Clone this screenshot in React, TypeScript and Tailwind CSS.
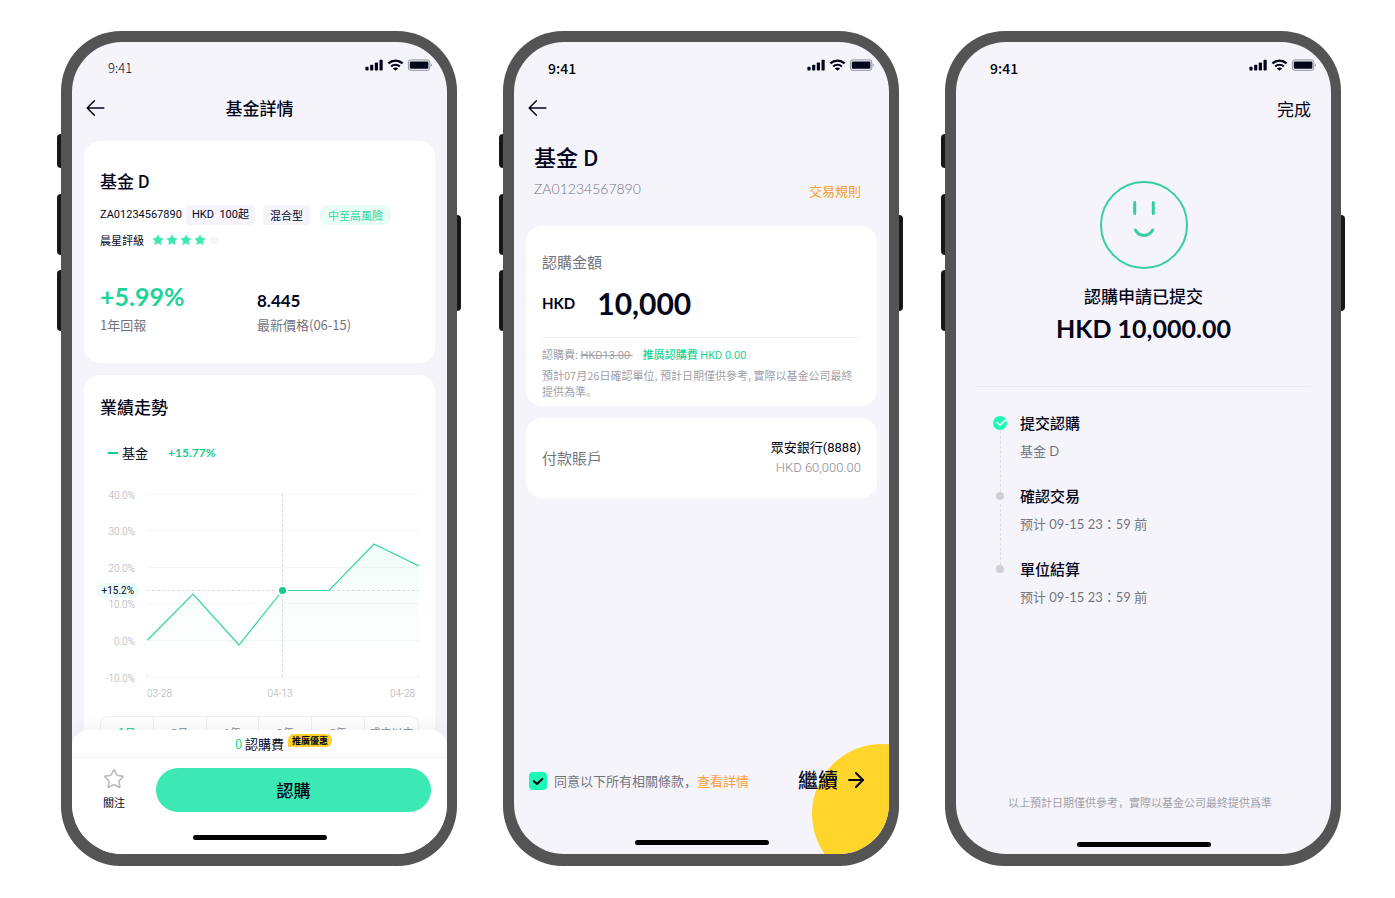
import React, { useState } from 'react';
import { Star, ArrowRight } from 'lucide-react';

const StatusBar = ({ light = false }: { light?: boolean }) => (
  <div className={`flex h-11 shrink-0 items-center justify-between pr-[15px] ${light ? 'pl-9' : 'pl-[34px]'}`}>
    <span className={`pt-2 leading-5 ${light ? 'text-[13px] font-light' : 'text-sm font-medium text-black'}`}>9:41</span>
    <svg width="67" height="12" viewBox="0 0 67 12" className="mt-0.5 shrink-0" aria-hidden="true">
      <g fill="#03051a">
        <rect x="0.4" y="7.8" width="3.2" height="3.7" rx="0.8" />
        <rect x="5.1" y="5.8" width="3.2" height="5.7" rx="0.8" />
        <rect x="9.8" y="3.4" width="3.2" height="8.1" rx="0.8" />
        <rect x="14.5" y="0.8" width="3.2" height="10.7" rx="0.8" />
        <path d="M27.8 9.4c1.5-1.3 3.9-1.3 5.4 0l-2.7 2.4Z" />
        <rect x="44.8" y="2.4" width="18.6" height="7.4" rx="1.2" />
      </g>
      <g fill="none" stroke="#03051a" strokeWidth="2.2">
        <path d="M23.4 4.4a10.4 10.4 0 0 1 14.2 0" />
        <path d="M26.2 7.5a6.2 6.2 0 0 1 8.6 0" />
      </g>
      <rect x="43.4" y="0.9" width="21.4" height="10.4" rx="2.4" fill="none" stroke="#03051a" strokeOpacity="0.4" />
      <path d="M65.8 4.4v3.4c.7-.3 1.1-.9 1.1-1.7s-.4-1.4-1.1-1.7Z" fill="#03051a" fillOpacity="0.4" />
    </svg>
  </div>
);

const BackButton = () => (
  <button type="button" aria-label="返回" className="flex h-6 w-6 items-center">
    <svg width="19" height="18" viewBox="0 0 19 18" fill="none" stroke="#03051a" strokeWidth="1.5" strokeLinecap="round" strokeLinejoin="round">
      <path d="M8.4 1.8 1.2 9l7.2 7.2M1.2 9h16.6" />
    </svg>
  </button>
);

const HomeIndicator = () => <div className="mx-auto h-[5px] w-[134px] rounded-full bg-black" />;

const Phone = ({ children }: { children: React.ReactNode }) => (
  <div className="relative flex aspect-[396/835] min-h-0 min-w-[360px] max-w-[440px] flex-1 flex-col rounded-[60px] bg-[#545454] pt-[11px] pr-[10px] pb-3 pl-[11px]">
    {/* Side buttons */}
    <div className="absolute top-[103px] -left-1 h-[34px] w-1 rounded-l-sm bg-[#171717]" />
    <div className="absolute top-[163px] -left-1 h-[61px] w-1 rounded-l-sm bg-[#171717]" />
    <div className="absolute top-[239px] -left-1 h-[61px] w-1 rounded-l-sm bg-[#171717]" />
    <div className="absolute top-[184px] -right-1 h-24 w-1 rounded-r-sm bg-[#171717]" />
    <section className="relative flex min-h-0 flex-1 flex-col overflow-hidden rounded-[50px] bg-[#f5f4fb]">
      {children}
    </section>
  </div>
);

const gridLines = [
  { label: '40.0%', y: 11.5 },
  { label: '30.0%', y: 47.5 },
  { label: '20.0%', y: 84.5 },
  { label: '10.0%', y: 120.5 },
  { label: '0.0%', y: 157.5 },
  { label: '-10.0%', y: 194.5 },
];

const PerformanceChart = () => (
  <svg viewBox="0 0 319 221" className="mt-5 w-full overflow-visible font-['Roboto',sans-serif] font-light" role="img" aria-label="業績走勢">
    <defs>
      <linearGradient id="area" x1="0" y1="0" x2="0" y2="1">
        <stop offset="0" stopColor="#1dd397" stopOpacity="0.06" />
        <stop offset="0.9" stopColor="#1dd397" stopOpacity="0" />
      </linearGradient>
    </defs>
    {gridLines.map((line) => (
      <g key={line.label}>
        <path d={`M47 ${line.y}H319`} stroke="#f6f6f8" />
        <text x="35" y={line.y + 4} textAnchor="end" fontSize="10" fill="#adadb2">{line.label}</text>
      </g>
    ))}
    <path d="M47.5 192v3M318.5 192v3" stroke="#e6e6ea" />
    <path d="M47.5 157 93 111 139 162 182.5 107.5H229L274 61 319 83V194H47.5Z" fill="url(#area)" />
    <path d="M47 107.5H319M182.5 11V194" stroke="#d9d9dd" strokeDasharray="3 2" />
    <path d="M47.5 157 93 111 139 162 182.5 107.5H229L274 61 319 83" fill="none" stroke="#2fd6a0" strokeWidth="1.2" />
    <circle cx="182.5" cy="107.5" r="4.5" fill="#14cb90" stroke="#fff" strokeWidth="2" />
    <rect x="-4" y="100" width="43" height="15" rx="7.5" fill="#eafcf6" />
    <text x="34" y="111" textAnchor="end" fontSize="10" fontWeight="400" fill="#03051a">+15.2%</text>
    <g fontSize="10" fill="#adadb2">
      <text x="47" y="214">03-28</text>
      <text x="180" y="214" textAnchor="middle">04-13</text>
      <text x="315" y="214" textAnchor="end">04-28</text>
    </g>
  </svg>
);

const FundDetail = () => {
  const [period, setPeriod] = useState('1月');
  const periods = ['1月', '3月', '1年', '3年', '5年', '成立以來'];

  return (
    <Phone>
      <StatusBar light />
      <header className="grid h-11 shrink-0 grid-cols-[1fr_auto_1fr] items-center px-3.5">
        <BackButton />
        <h1 className="text-[17px] leading-6 font-medium">基金詳情</h1>
      </header>

      <div className="min-h-0 flex-1 overflow-hidden px-3 pt-[11px]">
        {/* Fund summary */}
        <div className="rounded-2xl bg-white px-4 py-7">
          <h2 className="text-[17px] leading-6 font-medium">基金 D</h2>
          <div className="mt-3 flex h-5 items-center text-[11px] leading-5 whitespace-nowrap">
            <span className="w-[86px] font-['Roboto',sans-serif]">ZA01234567890</span>
            <span className="rounded bg-[#f5f4fb] px-1.5 font-['Roboto','Noto_Sans_CJK_TC',sans-serif]">HKD&nbsp; 100起</span>
            <span className="ml-2 rounded bg-[#f5f4fb] px-[7px]">混合型</span>
            <span className="ml-2.5 rounded-lg bg-[#eafcf6] px-2 text-[#2fd6a0]">中至高風險</span>
          </div>
          <div className="mt-[5px] flex h-5 items-center gap-2 text-[11px]">
            <span>晨星評級</span>
            <div className="flex gap-0.5" role="img" aria-label="4 / 5">
              {[1, 2, 3, 4, 5].map((n) => (
                <Star key={n} size={12} strokeWidth={1} className={n < 5 ? 'fill-[#3ce8b4] text-[#3ce8b4]' : 'fill-[#f5f4fb] text-[#f5f4fb]'} />
              ))}
            </div>
          </div>
          <div className="mt-8 grid grid-cols-[157px_1fr] items-end">
            <div>
              <p className="font-['Lato',sans-serif] text-[25px] leading-7 font-bold text-[#1dd397]">+5.99%</p>
              <p className="mt-[5px] text-[13px] leading-5 text-[#74747e]">1年回報</p>
            </div>
            <div>
              <p className="font-['Lato',sans-serif] text-[17px] leading-5 font-bold">8.445</p>
              <p className="mt-1 text-[13px] leading-5 text-[#74747e]">最新價格(06-15)</p>
            </div>
          </div>
        </div>

        {/* Performance */}
        <div className="mt-3 rounded-2xl bg-white px-4 pt-5 pb-10">
          <h2 className="text-[17px] leading-6 font-medium">業績走勢</h2>
          <div className="mt-6 flex h-5 items-center pl-2 text-[13px]">
            <span className="h-0.5 w-2.5 bg-[#14cb90]" />
            <span className="ml-1">基金</span>
            <span className="ml-5 font-['Lato',sans-serif] text-xs font-bold text-[#14cb90]">+15.77%</span>
          </div>
          <PerformanceChart />
          <div className="mt-3 grid grid-cols-6 divide-x divide-[#f0f0f3] rounded-lg border border-[#f0f0f3] text-[11px] text-[#8c8c95]">
            {periods.map((p) => (
              <button key={p} type="button" onClick={() => setPeriod(p)} className={`h-[30px] whitespace-nowrap ${p === period ? 'font-medium text-[#1dd397]' : ''}`}>
                {p}
              </button>
            ))}
          </div>
        </div>
      </div>

      {/* Bottom sheet */}
      <footer className="relative -mt-4 shrink-0 rounded-t-2xl bg-white pb-3.5 shadow-[0_-4px_20px_rgba(0,0,0,0.05)]">
        <div className="flex h-7 items-center justify-center border-b border-[#f2f2f4] text-[13px]">
          <p className="relative">
            <span className="text-[#1dd397]">0</span> 認購費
            <span className="absolute top-0 left-full ml-1 rounded-[6px] rounded-bl-none bg-[#ffd02b] px-1 text-[9px] leading-[13px] font-bold whitespace-nowrap">推廣優惠</span>
          </p>
        </div>
        <div className="flex pt-2.5 pr-4">
          <button type="button" className="flex w-[84px] flex-col items-center text-[11px] leading-4">
            <Star size={22} strokeWidth={1.8} className="text-[#bcbcc0]" />
            <span className="mt-1">關注</span>
          </button>
          <button type="button" className="h-11 flex-1 rounded-full bg-[#3ce8b4] text-[17px] font-medium">認購</button>
        </div>
        <div className="mt-[23px]">
          <HomeIndicator />
        </div>
      </footer>
    </Phone>
  );
};

const Subscribe = () => {
  const [amount, setAmount] = useState('10,000');
  const [agreed, setAgreed] = useState(true);

  return (
    <Phone>
      <div className="absolute -right-[63px] -bottom-[30px] h-[140px] w-[140px] rounded-full bg-[#ffd52c]" />
      <StatusBar />
      <header className="flex h-11 shrink-0 items-center px-3.5">
        <BackButton />
      </header>

      <div className="mt-2.5 flex items-end justify-between pr-7 pl-5">
        <div>
          <h1 className="text-[22px] leading-8 font-medium">基金 D</h1>
          <p className="mt-[7px] font-['Lato',sans-serif] text-sm leading-5 font-light text-[#74747e]">ZA01234567890</p>
        </div>
        <a href="#rules" className="text-[13px] leading-4 text-[#efa01c]">交易規則</a>
      </div>

      <div className="mx-3 mt-[27px] rounded-2xl bg-white px-4 pt-6 pb-[7px]">
        <label htmlFor="amount" className="block text-[15px] leading-6 text-[#74747e]">認購金額</label>
        <div className="mt-2 flex h-[42px] items-center gap-[22px]">
          <span className="font-['Lato',sans-serif] text-[15px] font-bold">HKD</span>
          <input
            id="amount"
            value={amount}
            onChange={(e) => setAmount(e.target.value)}
            className="min-w-0 flex-1 bg-transparent font-['Lato',sans-serif] text-[30px] leading-10 font-bold outline-none"
          />
        </div>
        <div className="mt-[13px] border-t border-[#f2f2f4] pt-2 text-[11px] leading-4 text-[#a0a0a8]">
          <p className="flex h-4 items-baseline gap-2.5 whitespace-nowrap">
            <span>認購費: <s className="font-['Roboto',sans-serif]">HKD13.00&nbsp;</s></span>
            <span className="font-medium text-[#1dd397]">推廣認購費 <span className="font-['Roboto',sans-serif] font-normal">HKD 0.00</span></span>
          </p>
          <p className="mt-[5px] font-['Noto_Sans_CJK_SC',sans-serif]">預計07月26日確認單位, 預計日期僅供參考, 實際以基金公司最終提供為準。</p>
        </div>
      </div>

      <div className="mx-3 mt-3 flex items-center justify-between rounded-2xl bg-white px-4 py-5">
        <span className="text-[15px] text-[#74747e]">付款賬戶</span>
        <div className="text-right font-['Roboto','Noto_Sans_CJK_TC',sans-serif] text-[13px] leading-5">
          <p>眾安銀行(8888)</p>
          <p className="font-light text-[#8c8c95]">HKD 60,000.00</p>
        </div>
      </div>

      <footer className="relative mt-auto pb-[9px]">
        <div className="flex h-6 items-center justify-between pr-[21px] pl-[15px]">
          <div className="flex items-center font-['Noto_Sans_CJK_SC',sans-serif] text-[13px] text-[#74747e]">
            <span className="relative flex h-[18px] w-[18px]">
              <input
                id="agree"
                type="checkbox"
                checked={agreed}
                onChange={(e) => setAgreed(e.target.checked)}
                className="h-[18px] w-[18px] appearance-none rounded bg-white checked:bg-[#1cf9b5]"
              />
              {agreed && (
                <svg viewBox="0 0 18 18" className="pointer-events-none absolute inset-0" fill="none" stroke="#03051a" strokeWidth="2.2" strokeLinecap="round" strokeLinejoin="round">
                  <path d="M5 9.2 8 12l5.2-5" />
                </svg>
              )}
            </span>
            <label htmlFor="agree" className="ml-[7px]">同意以下所有相關條款，</label>
            <a href="#terms" className="text-[#ff9f38]">查看詳情</a>
          </div>
          <button type="button" className="flex items-center gap-1.5 pb-0.5 text-xl leading-6 font-medium">
            繼續
            <ArrowRight size={24} strokeWidth={2} />
          </button>
        </div>
        <div className="mt-[47px]">
          <HomeIndicator />
        </div>
      </footer>
    </Phone>
  );
};

const steps = [
  { title: '提交認購', detail: '基金 D', done: true },
  { title: '確認交易', detail: '预计 09-15 23：59 前', done: false },
  { title: '單位結算', detail: '预计 09-15 23：59 前', done: false },
];

const Submitted = () => (
  <Phone>
    <StatusBar />
    <header className="flex h-11 shrink-0 items-center justify-end px-5 pt-0.5">
      <button type="button" className="text-[17px]">完成</button>
    </header>

    <div className="mt-[51px] flex flex-col items-center">
      <svg width="88" height="88" viewBox="0 0 88 88" fill="none" stroke="#35cf9f" strokeLinecap="round" aria-hidden="true">
        <circle cx="44" cy="44" r="43" strokeWidth="2" />
        <path d="M34.7 21.5v11M53.3 21.5v11M35.4 49c4 7.2 13.2 7.2 17.4 0" strokeWidth="3" />
      </svg>
      <h1 className="mt-[15px] text-[17px] leading-6 font-medium">認購申請已提交</h1>
      <p className="mt-1 font-['Lato',sans-serif] text-[25px] leading-8 font-bold">HKD 10,000.00</p>
    </div>

    <hr className="mx-5 mt-[42px] border-[#e9e9ef]" />

    <ol className="mt-6 px-[37px]">
      {steps.map((step, i) => (
        <li key={step.title} className="flex gap-[13px]">
          <div className="flex w-3.5 flex-col items-center">
            <div className="flex h-6 items-center">
              {step.done ? (
                <svg width="14" height="14" viewBox="0 0 14 14" aria-hidden="true">
                  <circle cx="7" cy="7" r="7" fill="#1cf9b5" />
                  <path d="m4.2 6.6 2.8 2.4 6.2-5.4" fill="none" stroke="#fff" strokeWidth="1.6" strokeLinecap="round" />
                </svg>
              ) : (
                <span className="h-2 w-2 rounded-full bg-[#cfcfd6]" />
              )}
            </div>
            {i < steps.length - 1 && <div className="-mt-1 -mb-2 flex-1 border-l border-dashed border-[#dcdce3]" />}
          </div>
          <div className={i < steps.length - 1 ? 'pb-[23px]' : ''}>
            <h3 className="text-[15px] leading-6 font-medium">{step.title}</h3>
            <p className="mt-1.5 font-['Lato','Noto_Sans_CJK_TC',sans-serif] text-[13px] leading-5 text-[#74747e]">{step.detail}</p>
          </div>
        </li>
      ))}
    </ol>

    <footer className="mt-auto pb-[7px]">
      <p className="pr-[7px] text-center font-['Noto_Sans_CJK_SC',sans-serif] text-[11px] leading-4 text-[#a0a0a8]">以上預計日期僅供參考，實際以基金公司最終提供爲準</p>
      <div className="mt-8">
        <HomeIndicator />
      </div>
    </footer>
  </Phone>
);

const App = () => {
  return (
    <main className="flex min-h-screen flex-wrap items-start justify-center gap-[46px] bg-white pt-[31px] pr-[54px] pb-8 pl-[61px] font-['Noto_Sans_CJK_TC',sans-serif] text-[#03051a]">
      <FundDetail />
      <Subscribe />
      <Submitted />
    </main>
  );
};

export default App;
